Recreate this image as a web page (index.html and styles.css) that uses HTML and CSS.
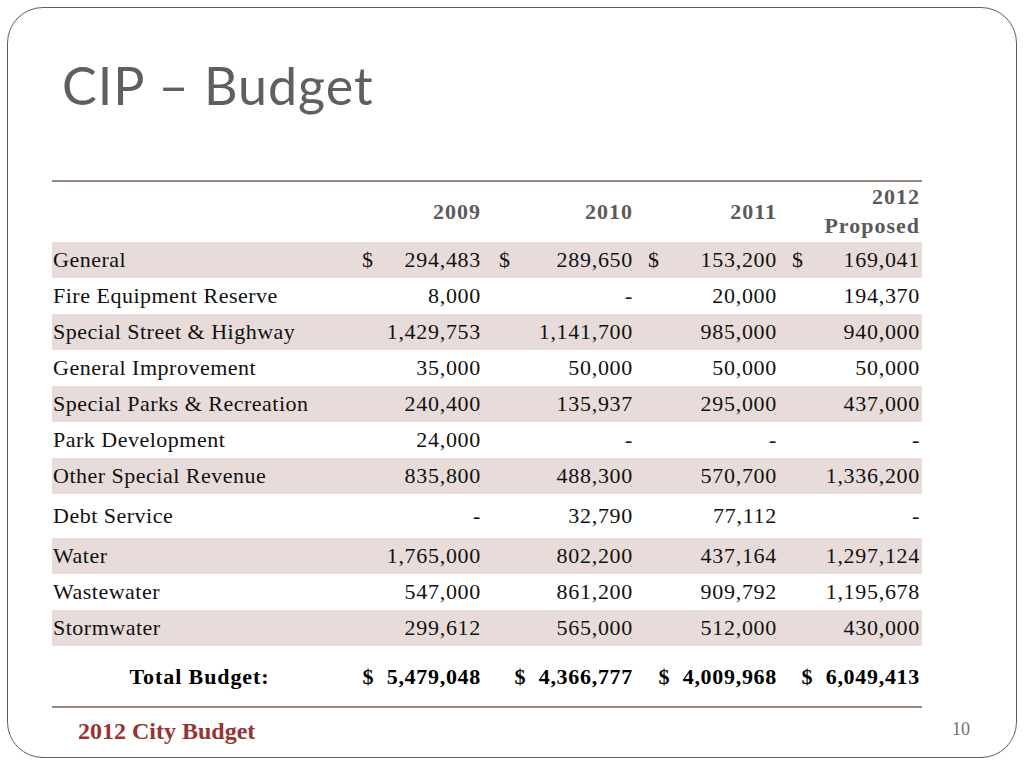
FILE: index.html
```html
<!DOCTYPE html>
<html>
<head>
<meta charset="utf-8">
<link rel="stylesheet" href="styles.css">
</head>
<body>
<div class="slide">
  <h1 class="title">CIP – Budget</h1>
  <div class="table">
    <div class="row head">
      <div class="cell label"></div>
      <div class="cell num">2009</div>
      <div class="cell num">2010</div>
      <div class="cell num">2011</div>
      <div class="cell num">2012<br>Proposed</div>
    </div>
    <div class="row shade">
      <div class="cell label">General</div>
      <div class="cell num"><span>$</span><span>294,483</span></div>
      <div class="cell num"><span>$</span><span>289,650</span></div>
      <div class="cell num"><span>$</span><span>153,200</span></div>
      <div class="cell num"><span>$</span><span>169,041</span></div>
    </div>
    <div class="row">
      <div class="cell label">Fire Equipment Reserve</div>
      <div class="cell num">8,000</div>
      <div class="cell num">-</div>
      <div class="cell num">20,000</div>
      <div class="cell num">194,370</div>
    </div>
    <div class="row shade">
      <div class="cell label">Special Street &amp; Highway</div>
      <div class="cell num">1,429,753</div>
      <div class="cell num">1,141,700</div>
      <div class="cell num">985,000</div>
      <div class="cell num">940,000</div>
    </div>
    <div class="row">
      <div class="cell label">General Improvement</div>
      <div class="cell num">35,000</div>
      <div class="cell num">50,000</div>
      <div class="cell num">50,000</div>
      <div class="cell num">50,000</div>
    </div>
    <div class="row shade">
      <div class="cell label">Special Parks &amp; Recreation</div>
      <div class="cell num">240,400</div>
      <div class="cell num">135,937</div>
      <div class="cell num">295,000</div>
      <div class="cell num">437,000</div>
    </div>
    <div class="row">
      <div class="cell label">Park Development</div>
      <div class="cell num">24,000</div>
      <div class="cell num">-</div>
      <div class="cell num">-</div>
      <div class="cell num">-</div>
    </div>
    <div class="row shade">
      <div class="cell label">Other Special Revenue</div>
      <div class="cell num">835,800</div>
      <div class="cell num">488,300</div>
      <div class="cell num">570,700</div>
      <div class="cell num">1,336,200</div>
    </div>
    <div class="row tall">
      <div class="cell label">Debt Service</div>
      <div class="cell num">-</div>
      <div class="cell num">32,790</div>
      <div class="cell num">77,112</div>
      <div class="cell num">-</div>
    </div>
    <div class="row shade">
      <div class="cell label">Water</div>
      <div class="cell num">1,765,000</div>
      <div class="cell num">802,200</div>
      <div class="cell num">437,164</div>
      <div class="cell num">1,297,124</div>
    </div>
    <div class="row">
      <div class="cell label">Wastewater</div>
      <div class="cell num">547,000</div>
      <div class="cell num">861,200</div>
      <div class="cell num">909,792</div>
      <div class="cell num">1,195,678</div>
    </div>
    <div class="row shade">
      <div class="cell label">Stormwater</div>
      <div class="cell num">299,612</div>
      <div class="cell num">565,000</div>
      <div class="cell num">512,000</div>
      <div class="cell num">430,000</div>
    </div>
    <div class="row total">
      <div class="cell label">Total Budget:</div>
      <div class="cell num">$&nbsp; 5,479,048</div>
      <div class="cell num">$&nbsp; 4,366,777</div>
      <div class="cell num">$&nbsp; 4,009,968</div>
      <div class="cell num">$&nbsp; 6,049,413</div>
    </div>
  </div>
  <div class="footer">
    <span class="foot-title">2012 City Budget</span>
    <span class="page">10</span>
  </div>
</div>
</body>
</html>
```

FILE: styles.css
```css
html, body {
  margin: 0;
  padding: 0;
  background: #ffffff;
}

.slide {
  box-sizing: border-box;
  margin: 7px;
  width: 1010px;
  height: 751px;
  border: 1px solid #5e5e5e;
  border-radius: 36px;
  padding-top: 47px;
}

.title {
  margin: 0 0 0 54px;
  font-family: Lato, "Liberation Sans", sans-serif;
  font-weight: 400;
  font-size: 52px;
  letter-spacing: 1px;
  line-height: 60px;
  color: #5f5f5f;
}

.table {
  margin: 65px 0 0 44px;
  width: 870px;
  font-family: "Liberation Serif", serif;
  font-size: 22px;
  letter-spacing: 0.5px;
  color: #111111;
}

.row {
  display: grid;
  grid-template-columns: 295px 143px 152px 144px 136px;
  height: 36px;
  align-items: center;
}

.row.shade {
  background: #e8dcda;
}

.row.tall {
  height: 44px;
}

.row.head {
  box-sizing: border-box;
  height: 62px;
  padding-bottom: 2px;
  border-top: 2px solid #9c877c;
  font-weight: bold;
  color: #5a5a5a;
  line-height: 29px;
}

.row.head .cell.num {
  letter-spacing: 1px;
}

.row.total {
  box-sizing: border-box;
  height: 62px;
  padding-top: 2px;
  border-bottom: 2px solid #9c877c;
  font-weight: bold;
  color: #000000;
  letter-spacing: 0.9px;
}

.cell {
  white-space: nowrap;
}

.cell.label {
  padding-left: 1px;
}

.cell.num {
  display: flex;
  justify-content: flex-end;
  text-align: right;
  letter-spacing: 0.7px;
}

.row.shade .cell.num span:first-child {
  margin-right: auto;
}

.row .cell:nth-child(2) { padding: 0 9px 0 15px; }
.row .cell:nth-child(3) { padding: 0 9px 0 9px; }
.row .cell:nth-child(4) { padding: 0 9px 0 6px; }
.row .cell:nth-child(5) { padding: 0 2px 0 6px; }

.row.total .cell.label {
  text-align: center;
  padding-left: 0;
}

.footer {
  display: flex;
  justify-content: space-between;
  align-items: flex-start;
  margin: 8px 46px 0 70px;
}

.foot-title {
  font-family: "Liberation Serif", serif;
  font-weight: bold;
  font-size: 24px;
  line-height: 30px;
  color: #973331;
}

.page {
  font-family: "Liberation Serif", serif;
  font-size: 18px;
  line-height: 20px;
  margin-top: 3px;
  color: #707070;
}
```
